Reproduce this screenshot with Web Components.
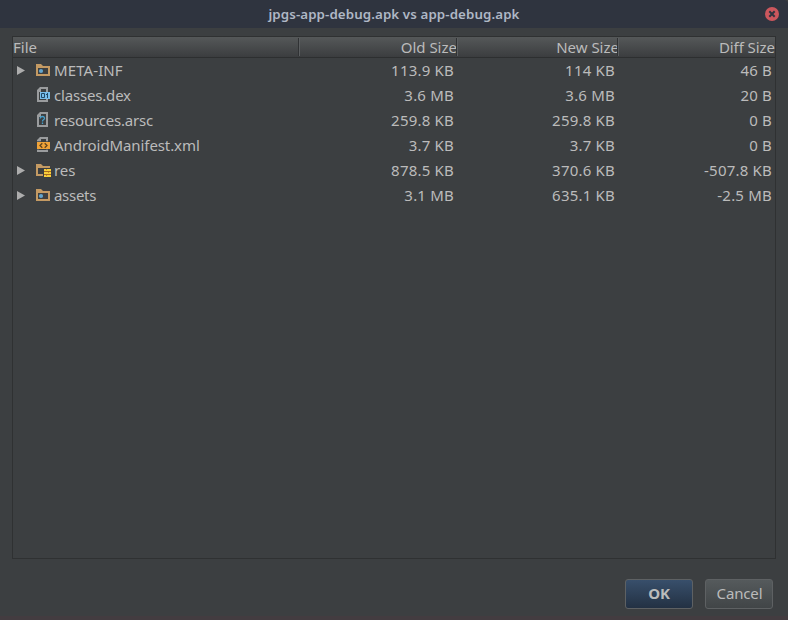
<!DOCTYPE html>
<html lang="en"><head><meta charset="utf-8"><title>APK comparison</title>
<style>
html,body{margin:0;height:100%;overflow:hidden;background:#3c3f41}
body{font:15px/25px "Noto Sans",sans-serif;color:#bbb}
</style></head><body>
<apk-dialog heading="jpgs-app-debug.apk vs app-debug.apk">
<size-table>
<size-row branch icon="folder" name="META-INF" old="113.9 KB" new="114 KB" diff="46 B" style="--name-spacing:.1px"></size-row>
<size-row icon="dex" name="classes.dex" old="3.6 MB" new="3.6 MB" diff="20 B" style="--name-spacing:-.18px"></size-row>
<size-row icon="unknown" name="resources.arsc" old="259.8 KB" new="259.8 KB" diff="0 B" style="--name-spacing:-.18px"></size-row>
<size-row icon="xml" name="AndroidManifest.xml" old="3.7 KB" new="3.7 KB" diff="0 B" style="--name-spacing:-.09px"></size-row>
<size-row branch icon="res" name="res" old="878.5 KB" new="370.6 KB" diff="-507.8 KB" style="--name-spacing:-.1px"></size-row>
<size-row branch icon="folder" name="assets" old="3.1 MB" new="635.1 KB" diff="-2.5 MB" style="--name-spacing:-.3px"></size-row>
</size-table>
<dialog-button slot="actions" primary>OK</dialog-button>
<dialog-button slot="actions">Cancel</dialog-button>
</apk-dialog>
<script>
const folder = '<path fill="#c49a63" fill-rule="evenodd" d="M1 2h5l2 2h7v10H1zM3 6v6h10V6z"/>';
const page = '<path fill="#9a9c9e" fill-rule="evenodd" d="M5 0h8v15H2V3zM6 2v3H4v8h7V2z"/>';
const icons = {
  folder: folder + '<circle cx="6" cy="9" r="2.1" fill="#62a5ce"/>',
  res: folder + '<path fill="#3c3f41" d="M8 6h8v9H8z"/><path fill="#f8cf3b" d="M9 7h7v2H9zM9 10h7v2H9zM9 13h7v2H9z"/><path stroke="#a76b20" d="M9 9.5h7M9 12.5h7"/><path stroke="#c98a25" d="M11.5 7v1M13.5 10v1M11.5 13v1"/>',
  dex: page + '<path fill="#78bdeb" d="M5 5h10v7H5z"/><path fill="none" stroke="#214966" d="M6.5 6.5h3v4h-3zM11 7.5h1.5M12.5 6v5"/>',
  unknown: page + '<path fill="none" stroke="#459fcb" stroke-width="1.3" d="M5.3 6.5V5.8Q5.6 4.5 7.4 4.5t2.2 1.6Q9.7 7 8.4 7.8 7.5 8.4 7.5 9.5M7.5 10.5v1.5"/>',
  xml: page + '<path fill="#3c3f41" d="M1 4.3h14v8.4H1z"/><path fill="#f0a338" d="M2 5h13v7H2z"/><path fill="none" stroke="#60451f" stroke-width="1.3" d="M7.3 6.2L5 8.5l2.3 2.3M9.7 6.2L12 8.5l-2.3 2.3"/>'
};
class ApkDialog extends HTMLElement {
  connectedCallback() {
    this.attachShadow({mode:'open'}).innerHTML = `<style>
:host{display:flex;flex-direction:column;height:620px;box-sizing:border-box;border-bottom:4px solid #433c40}
header{height:28px;background:#2f343f;display:grid;grid-template-columns:32px 1fr 32px;align-items:center;border-radius:0 4px 0 0;flex:none}
h1{grid-column:2;margin:0;text-align:center;font:600 13.33px/28px "Noto Sans",sans-serif;letter-spacing:.1px;color:#afb8c6;white-space:nowrap}
svg{width:14px;height:14px;justify-self:center}
main{padding:8px 12px 0;height:523px}
footer{display:flex;justify-content:flex-end;gap:12px;padding:20px 15px 0 0}
</style><header><h1>${this.getAttribute('heading')}</h1><svg viewBox="0 0 14 14"><circle cx="7" cy="7" r="7" fill="#cc575d"/><path stroke="#2f343f" stroke-width="2" d="M4.3 4.3l5.4 5.4M9.7 4.3L4.3 9.7"/></svg></header><main><slot></slot></main><footer><slot name="actions"></slot></footer>`;
  }
}
class SizeTable extends HTMLElement {
  connectedCallback() {
    this.attachShadow({mode:'open'}).innerHTML = `<style>
:host{display:block;box-sizing:border-box;width:764px;height:523px;border:1px solid #2f3132}
.head{display:grid;grid-template-columns:286px 158px 161px 157px;box-sizing:border-box;height:21px;line-height:21px;background:linear-gradient(#555859,#3b3d3f);border-bottom:1px solid #2d2f30;margin-bottom:-1px}
span{position:relative;text-align:right}
span:first-child{text-align:left}
span:nth-child(3){margin-right:-1px}
span:nth-child(4){letter-spacing:-.06px}
span:not(:last-child)::after{content:"";position:absolute;right:-1px;top:1px;width:1px;height:18px;background:#303234;border-right:1px solid #5b5e60}
span:nth-child(3)::after{right:0}
</style><div class="head"><span>File</span><span>Old Size</span><span>New Size</span><span>Diff Size</span></div><slot></slot>`;
  }
}
class SizeRow extends HTMLElement {
  connectedCallback() {
    const a = n => this.getAttribute(n);
    this.attachShadow({mode:'open'}).innerHTML = `<style>
:host{display:grid;grid-template-columns:286px 155px 161px 157px;height:25px;line-height:26px;text-align:right;white-space:nowrap}
.name{display:grid;grid-template-columns:22px 16px auto;justify-content:start;align-items:start;text-align:left}
.label{padding-left:3px;letter-spacing:var(--name-spacing)}
.size{letter-spacing:.2px}
svg{display:block;margin-top:5px}
.arrow{margin:9px 0 0 4px}
</style><div class="name"><svg class="arrow" width="9" height="10" viewBox="0 0 9 10">${this.hasAttribute('branch')?'<path fill="#adadad" d="M0 0l8 4.5-8 4.5z"/>':''}</svg><svg width="16" height="16" viewBox="0 0 16 16">${icons[a('icon')]}</svg><span class="label">${a('name')}</span></div><span class="size">${a('old')}</span><span class="size">${a('new')}</span><span class="size">${a('diff')}</span>`;
  }
}
class DialogButton extends HTMLElement {
  connectedCallback() {
    this.attachShadow({mode:'open'}).innerHTML = `<style>
:host{display:block;box-sizing:border-box;width:68px;height:30px;border:1px solid #5e6163;border-radius:3px;background:linear-gradient(#555a5c,#414547);text-align:center;line-height:27px;padding-left:1px;letter-spacing:-.15px}
:host([primary]){background:linear-gradient(#384f6b,#233143);font-weight:bold;padding-left:0}
</style><slot></slot>`;
  }
}
customElements.define('apk-dialog',ApkDialog);
customElements.define('size-table',SizeTable);
customElements.define('size-row',SizeRow);
customElements.define('dialog-button',DialogButton);
</script></body></html>
